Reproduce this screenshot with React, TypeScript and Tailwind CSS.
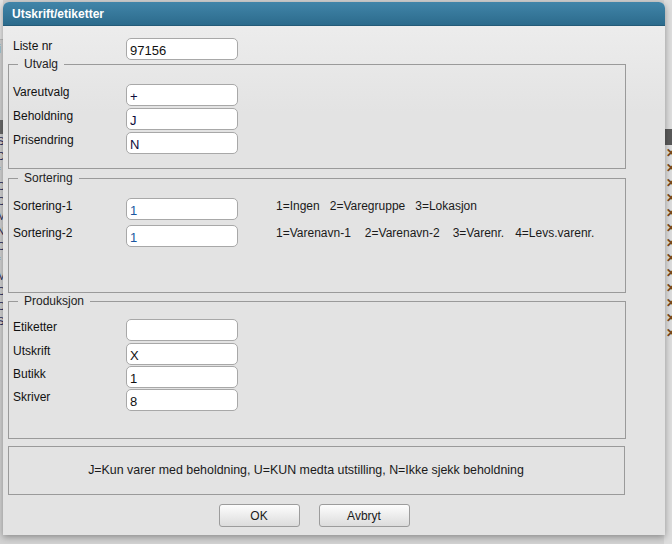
import React from 'react';

const font = "font-['Liberation_Sans',Arial,sans-serif]";

interface FieldProps {
  label: string;
  value: string;
  valueClass?: string;
  className?: string;
}

function Field({ label, value, valueClass = 'text-[#111]', className = '' }: FieldProps) {
  return (
    <div className={`flex items-start h-[22px] ${className}`}>
      <span className="w-[113px] shrink-0 text-[12px] leading-[16px] text-[#111]">{label}</span>
      <input
        readOnly
        value={value}
        className={`w-[112px] h-[22px] rounded-[5px] border border-[#a8a8a8] bg-white pl-[3px] pt-[3px] text-[13px] outline-none ${valueClass}`}
      />
    </div>
  );
}

function Group({
  title,
  className,
  children,
}: {
  title: string;
  className: string;
  children: React.ReactNode;
}) {
  return (
    <fieldset className={`mx-[5px] w-[618px] border border-[#9a9a9a] ${className}`}>
      <legend className="ml-[5px] px-[6px] text-[12px] leading-[16px] text-[#222]">{title}</legend>
      {children}
    </fieldset>
  );
}

function Backdrop() {
  const rows = ['S', 'D', 'f', 'C', 'C', 'M', 'N', 'C', 'f', 'M', 'C', 'C', 'S'];
  return (
    <div className="flex h-full w-full justify-between">
      <div className="flex w-[3px] flex-col overflow-hidden">
        <div className="h-[40px] border-b border-[#bbb] bg-[#e4e4e4]" />
        <div className="-ml-[2px] h-[80px] text-[12px] text-[#111]">i</div>
        <div className="h-[14px] bg-[#6a6a6a]" />
        <div className="-ml-[3px] flex flex-col text-[11px] leading-[15px] text-[#2a2a5a]">
          {rows.map((r, i) => (
            <span key={i}>{r}</span>
          ))}
        </div>
      </div>
      <div className="flex w-[8px] flex-col overflow-hidden bg-[#dedede]">
        <div className="h-[129px]" />
        <div className="h-[16px] bg-[#5a5a5a]" />
        <div className="flex flex-col pl-[2px] pt-[1px] text-[12px] font-bold leading-[15px] text-[#7a4a1a]">
          {rows.map((_, i) => (
            <span key={i}>✕</span>
          ))}
        </div>
      </div>
    </div>
  );
}

export default function App() {
  return (
    <div className={`relative h-[544px] w-[672px] overflow-hidden bg-[#d2d2d2] ${font}`}>
      <Backdrop />

      <div className="absolute left-[3px] top-[2px] flex h-[533px] w-[662px] flex-col rounded-t-[6px] bg-[linear-gradient(#efefef,#e3e3e3_110px)] shadow-[0_2px_7px_rgba(0,0,0,0.35)]">
        <div className="flex h-[24px] items-center rounded-t-[6px] border-b border-[#245b78] bg-[linear-gradient(#4185a9,#2c6b8c)] pl-[9px]">
          <span className="text-[12px] font-bold text-white">Utskrift/etiketter</span>
        </div>

        <Field label="Liste nr" value="97156" className="ml-[10px] mt-[12px]" />

        <Group title="Utvalg" className="-mt-[4px] h-[113px] pl-[4px] pt-[12px]">
          <div className="flex flex-col gap-[2px]">
            <Field label="Vareutvalg" value="+" valueClass="text-[#0c0c3c]" />
            <Field label="Beholdning" value="J" valueClass="text-[#0c0c3c]" />
            <Field label="Prisendring" value="N" valueClass="text-[#0c0c3c]" />
          </div>
        </Group>

        <Group title="Sortering" className="mt-[1px] h-[123px] pl-[4px] pt-[12px]">
          <div className="flex flex-col gap-[5px]">
            <div className="flex items-start">
              <Field label="Sortering-1" value="1" valueClass="text-[#1a56a0]" />
              <div className="ml-[38px] flex text-[12px] leading-[16px] text-[#1a1a1a]">
                <span>1=Ingen</span>
                <span className="ml-[10px]">2=Varegruppe</span>
                <span className="ml-[10px]">3=Lokasjon</span>
              </div>
            </div>
            <div className="flex items-start">
              <Field label="Sortering-2" value="1" valueClass="text-[#1a56a0]" />
              <div className="ml-[38px] flex text-[12px] leading-[16px] text-[#1a1a1a]">
                <span>1=Varenavn-1</span>
                <span className="ml-[14px]">2=Varenavn-2</span>
                <span className="ml-[13px]">3=Varenr.</span>
                <span className="ml-[11px]">4=Levs.varenr.</span>
              </div>
            </div>
          </div>
        </Group>

        <Group title="Produksjon" className="h-[146px] pl-[4px] pt-[10px]">
          <div className="flex flex-col">
            <Field label="Etiketter" value="" />
            <Field label="Utskrift" value="X" className="mt-[2px]" />
            <Field label="Butikk" value="1" className="mt-[1px]" />
            <Field label="Skriver" value="8" className="mt-[1px]" />
          </div>
        </Group>

        <div className="ml-[5px] mt-[7px] flex h-[49px] w-[617px] items-center justify-center border border-[#9a9a9a] pr-[21px] text-[12.4px] text-[#1a1a1a]">
          J=Kun varer med beholdning, U=KUN medta utstilling, N=Ikke sjekk beholdning
        </div>

        <div className="mt-[9px] flex justify-center gap-[19px] pr-[40px]">
          <button className="h-[23px] w-[81px] rounded-[3px] border border-[#9c9c9c] bg-[linear-gradient(#fdfdfd,#dcdcdc)] text-[12px] text-[#1a1a1a]">
            OK
          </button>
          <button className="h-[23px] w-[91px] rounded-[3px] border border-[#9c9c9c] bg-[linear-gradient(#fdfdfd,#dcdcdc)] text-[12px] text-[#1a1a1a]">
            Avbryt
          </button>
        </div>
      </div>
    </div>
  );
}
